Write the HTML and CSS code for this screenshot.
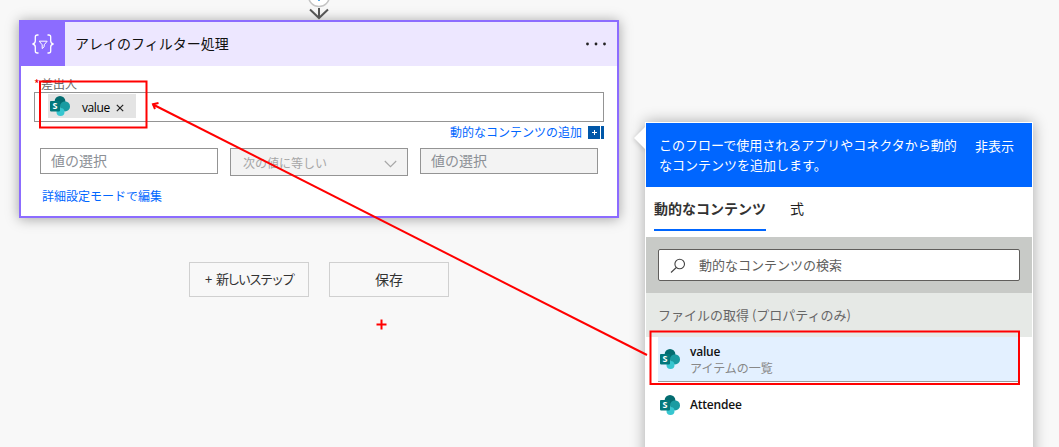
FILE: index.html
```
<!DOCTYPE html>
<html lang="ja">
<head>
    <meta charset="UTF-8">
    <meta name="viewport" content="width=device-width, initial-scale=1.0">
    <title>アレイのフィルター処理</title>
    <link rel="stylesheet" href="styles.css">
</head>
<body>
    <!-- SharePoint icon shapes, reused by the token and the list -->
    <svg class="defs" width="0" height="0">
        <symbol id="sharepoint" viewBox="0 0 20 20">
            <circle cx="10" cy="5.4" r="5.4" fill="#036c70"/>
            <circle cx="15" cy="10.4" r="5" fill="#1a9ba1"/>
            <circle cx="10.5" cy="16" r="4" fill="#37c6d0"/>
            <rect x="0" y="5" width="10" height="10.4" rx="0.8" fill="#03787c"/>
        </symbol>
    </svg>

    <main class="designer">
        <svg class="connector" width="28" height="20" viewBox="0 0 28 20">
            <circle cx="14" cy="-4" r="10.5" fill="#fff" stroke="#c4c4c4" stroke-width="1.5"/>
            <path d="M14 -4V1" stroke="#0078d4" stroke-width="1.3"/>
            <path d="M14 8V18M5 9.5L14 18L23 9.5" fill="none" stroke="#555" stroke-width="2"/>
        </svg>

        <section class="card">
            <header class="card-header">
                <div class="card-icon">
                    <svg width="24" height="22" viewBox="0 0 24 22" fill="none" stroke="#fff" stroke-width="1.3">
                        <path d="M7.5 2H6.3Q4.3 2 4.3 4V8Q4.3 10.5 1.5 11Q4.3 11.5 4.3 14V18Q4.3 20 6.3 20H7.5"/>
                        <path d="M16.5 2H17.7Q19.7 2 19.7 4V8Q19.7 10.5 22.5 11Q19.7 11.5 19.7 14V18Q19.7 20 17.7 20H16.5"/>
                        <path d="M8.2 8.2H16.2L13.2 11.8V13.7L11.2 15.6V11.8Z" stroke-width="1"/>
                    </svg>
                </div>
                <h1>アレイのフィルター処理</h1>
                <svg class="more" width="22" height="4" viewBox="0 0 22 4" fill="#222">
                    <circle cx="2.5" cy="2" r="1.4"/>
                    <circle cx="11" cy="2" r="1.4"/>
                    <circle cx="19.5" cy="2" r="1.4"/>
                </svg>
            </header>
            <div class="card-body">
                <label class="field-label"><span class="required">*</span>差出人</label>
                <div class="token-input">
                    <span class="token">
                        <svg width="20" height="20"><use href="#sharepoint"/><text class="sp-letter" x="5" y="13.4" text-anchor="middle">S</text></svg>
                        <span>value</span>
                        <svg class="remove" width="8" height="8" viewBox="0 0 8 8" stroke="#222" stroke-width="1.2"><path d="M0.8 0.8L7.2 7.2M7.2 0.8L0.8 7.2"/></svg>
                    </span>
                </div>
                <div class="add-row">
                    <a>動的なコンテンツの追加</a>
                    <svg width="16" height="13" viewBox="0 0 16 13">
                        <path d="M0 0H12V13H0ZM13 0H16V13H13Z" fill="#0057a8"/>
                        <path d="M6.5 4V9M4 6.5H9" stroke="#fff"/>
                    </svg>
                </div>
                <div class="condition">
                    <div class="value-box">値の選択</div>
                    <div class="operator">
                        <span>次の値に等しい</span>
                        <svg width="13" height="8" viewBox="0 0 13 8" fill="none" stroke="#a6a6a6" stroke-width="1.1"><path d="M0.8 1L6.5 6.7L12.2 1"/></svg>
                    </div>
                    <div class="value-box disabled">値の選択</div>
                </div>
                <a class="advanced">詳細設定モードで編集</a>
            </div>
        </section>

        <div class="actions">
            <button class="action"><span class="plus">+</span><span class="narrow">新しいステップ</span></button>
            <button class="action">保存</button>
        </div>
    </main>

    <aside class="panel">
        <svg class="beak" width="12" height="24" viewBox="0 0 12 24"><path d="M12 0L0 12L12 24Z" fill="#fff"/></svg>
        <header class="panel-header">
            <p>このフローで使用されるアプリやコネクタから動的なコンテンツを追加します。</p>
            <a>非表示</a>
        </header>
        <nav class="tabs">
            <a class="tab active">動的なコンテンツ</a>
            <a class="tab">式</a>
        </nav>
        <div class="search-area">
            <div class="search">
                <svg width="16" height="16" viewBox="0 0 16 16" fill="none" stroke="#444" stroke-width="1.1"><circle cx="9.7" cy="7" r="4.8"/><path d="M6.3 10.5L1 15.5"/></svg>
                <span>動的なコンテンツの検索</span>
            </div>
        </div>
        <h2 class="group">ファイルの取得 (プロパティのみ)</h2>
        <ul class="items">
            <li class="item selected">
                <svg width="20" height="20"><use href="#sharepoint"/><text class="sp-letter" x="5" y="13.4" text-anchor="middle">S</text></svg>
                <div class="item-text">
                    <strong>value</strong>
                    <small>アイテムの一覧</small>
                </div>
            </li>
            <li class="item">
                <svg width="20" height="20"><use href="#sharepoint"/><text class="sp-letter" x="5" y="13.4" text-anchor="middle">S</text></svg>
                <strong>Attendee</strong>
            </li>
        </ul>
    </aside>

    <!-- Red callouts drawn over the page -->
    <svg class="marks" width="1059" height="447" viewBox="0 0 1059 447" fill="none" stroke="#f00" stroke-width="2">
        <rect x="40" y="81.5" width="106.5" height="46"/>
        <rect x="650.5" y="331.5" width="368.5" height="52.5"/>
        <path d="M647 355L153 104.5"/>
        <path d="M158.5 103L153 104.2L155 109"/>
        <path d="M381.5 319.5V329.5M376.5 324.5H386.5"/>
    </svg>
</body>
</html>
```

FILE: styles.css
```
:root {
    --purple: #8c6cff;
    --purple-light: #ede7ff;
    --blue: #0066ff;
    --field-border: #949494;
}

* {
    margin: 0;
    padding: 0;
    box-sizing: border-box;
}

body {
    position: relative;
    display: flex;
    align-items: flex-start;
    gap: 26px;
    width: 1059px;
    height: 447px;
    padding-left: 19px;
    overflow: hidden;
    background: #f8f8f8;
    font-family: "Noto Sans CJK JP", sans-serif;
    font-size: 12px;
    color: #222;
}

svg {
    display: block;
    flex-shrink: 0;
}

.defs {
    position: absolute;
}

.sp-letter {
    font: bold 9px "Open Sans", sans-serif;
    fill: #fff;
}

.designer {
    width: 600px;
    flex-shrink: 0;
}

.connector {
    margin: 0 auto;
}

/* Action card */
.card {
    height: 198px;
    border: 2px solid var(--purple);
    background: #fff;
    box-shadow: 0 1px 12px rgba(0, 0, 0, 0.35);
}

.card-header {
    display: flex;
    align-items: center;
    height: 44px;
    padding-right: 10px;
    background: var(--purple-light);
}

.card-icon {
    display: flex;
    align-items: center;
    justify-content: center;
    width: 44px;
    height: 44px;
    background: var(--purple);
}

.card-header h1 {
    flex: 1;
    margin-left: 10px;
    padding-bottom: 2px;
    font-size: 14px;
    font-weight: 400;
    color: #111;
}

.card-body {
    padding: 10px 13px 0;
}

.field-label {
    display: block;
    height: 16px;
    line-height: 16px;
    color: #666;
}

.required {
    display: inline-block;
    width: 7px;
    color: #e00;
}

.token-input {
    height: 30px;
    padding: 1px 13px;
    border: 1px solid var(--field-border);
}

.token {
    display: flex;
    align-items: center;
    width: 88px;
    height: 24px;
    padding-left: 2px;
    background: #e4e4e4;
    font-family: "Open Sans", sans-serif;
    color: #000;
}

.token span {
    margin: 2px 0 0 12px;
    letter-spacing: -0.4px;
}

.remove {
    margin: 4px 0 0 6px;
}

.add-row {
    display: flex;
    justify-content: flex-end;
    gap: 6px;
    height: 26px;
    padding-top: 4px;
    line-height: 12px;
    color: var(--blue);
}

.condition {
    display: flex;
    align-items: flex-start;
    gap: 12px;
    margin-left: 6px;
}

.value-box {
    width: 178px;
    height: 26px;
    padding-left: 10px;
    border: 1px solid var(--field-border);
    font-size: 14px;
    line-height: 23px;
    color: #8c9096;
}

.value-box.disabled {
    background: #f3f3f3;
}

.operator {
    display: flex;
    align-items: center;
    justify-content: space-between;
    width: 178px;
    height: 28px;
    padding: 1px 10px 0 12px;
    border: 1px solid var(--field-border);
    background: #f3f3f3;
    color: #a6a6a6;
}

.operator svg {
    margin-top: 2px;
}

.advanced {
    display: block;
    margin: 11px 0 0 8px;
    line-height: 18px;
    color: var(--blue);
}

/* Buttons below the card */
.actions {
    display: flex;
    justify-content: center;
    gap: 20px;
    margin-top: 44px;
}

.action {
    display: flex;
    align-items: center;
    justify-content: center;
    width: 120px;
    height: 35px;
    padding-bottom: 2px;
    border: 1px solid #d0d0d0;
    background: #f8f8f8;
    font-family: inherit;
    font-size: 14px;
    color: #333;
}

.plus {
    margin-right: 4px;
    font-size: 13px;
}

.narrow {
    font-size: 13px;
    letter-spacing: -2px;
}

/* Dynamic content panel */
.panel {
    position: relative;
    width: 388px;
    height: 340px;
    flex-shrink: 0;
    margin-top: 122px;
    padding: 1px;
    background: #fff;
    box-shadow: 0 0 14px rgba(0, 0, 0, 0.32);
}

.beak {
    position: absolute;
    top: 4px;
    left: -11px;
    filter: drop-shadow(-1px 1px 2px rgba(0, 0, 0, 0.15));
}

.panel-header {
    display: flex;
    justify-content: space-between;
    height: 64px;
    padding: 12px 18px 0 13px;
    background: var(--blue);
    font-size: 13px;
    line-height: 20px;
    color: #fff;
}

.panel-header p {
    width: 302px;
}

.panel-header a {
    margin-top: 1px;
}

.tabs {
    display: flex;
    gap: 24px;
    height: 50px;
    padding-left: 8px;
    font-size: 14px;
}

.tab {
    height: 44px;
    line-height: 43px;
}

.tab.active {
    border-bottom: 2px solid var(--blue);
    font-weight: 700;
    color: #333;
}

.search-area {
    height: 56px;
    padding: 12px;
    background: #c8cac7;
}

.search {
    display: flex;
    align-items: center;
    gap: 13px;
    height: 32px;
    padding-left: 11px;
    border: 1px solid #605e5c;
    border-radius: 2px;
    background: #fff;
    font-size: 13px;
    color: #605e5c;
}

.search span {
    padding-bottom: 2px;
}

.group {
    height: 44px;
    padding-left: 12px;
    background: #e6e9e6;
    font-size: 13px;
    font-weight: 400;
    line-height: 43px;
    color: #666;
}

.items {
    padding: 0 12px;
    list-style: none;
}

.item {
    display: flex;
    align-items: center;
    gap: 10px;
    height: 45px;
    padding-left: 2px;
}

.item.selected {
    border-bottom: 1px solid #999;
    background: #e3f0ff;
}

.item-text {
    padding-top: 2px;
}

.item strong {
    display: block;
    font: 600 12px/16px "Open Sans", sans-serif;
    letter-spacing: -0.2px;
    color: #111;
}

.item small {
    display: block;
    font-size: 12px;
    line-height: 16px;
    color: #888;
}

.marks {
    position: absolute;
    top: 0;
    left: 0;
    pointer-events: none;
}
```
